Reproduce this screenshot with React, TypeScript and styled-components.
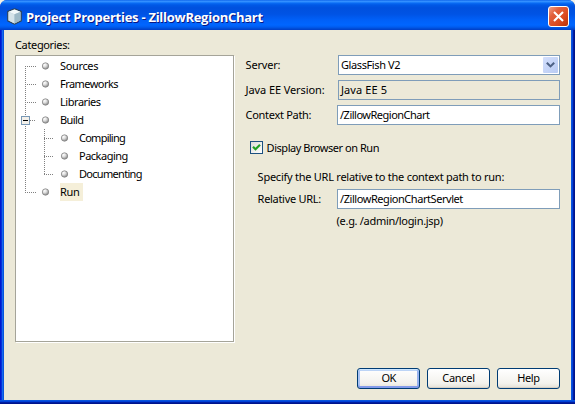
import React from "react";
import styled, { createGlobalStyle } from "styled-components";

const Global = createGlobalStyle`
  * { box-sizing: border-box; }
  html, body { margin: 0; background: #f4f2e6; }
  body { width: 575px; height: 404px; overflow: hidden; }
`;

const Window = styled.div`
  display: flex;
  flex-direction: column;
  width: 575px;
  height: 404px;
  padding: 0 4px 4px;
  border-radius: 7px 7px 0 0;
  background:
    linear-gradient(to bottom, #0855dd 0 1px, #0040d8 1px 2px, #001ea0 2px 3px, #00138c 3px 4px) bottom / 100% 4px no-repeat,
    linear-gradient(to right, #0019cf 0 1px, #0831d9 1px 2px, #166aee 2px 3px, #0855dd 3px 4px) left / 4px 100% no-repeat,
    linear-gradient(to right, #0855dd 0 1px, #0441d8 1px 2px, #001ea0 2px 3px, #00138c 3px 4px) right / 4px 100% no-repeat,
    #0855dd;
  color: #000;
  font-family: "Noto Sans", "Open Sans", sans-serif;
  font-size: 11px;
`;

const TitleBar = styled.header`
  display: flex;
  align-items: center;
  flex: 0 0 30px;
  margin: 0 -4px;
  padding: 2px 7px 0 7px;
  border-radius: 7px 7px 0 0;
  background: linear-gradient(to bottom, #0058e6 0, #3a93ff 1px, #2a8bff 2px, #0a6cf4 3px, #0058e6 5px, #0050de 8px, #0053e4 14px, #0060f8 20px, #0066ff 25px, #005cf0 27px, #0048d0 29px, #003dc8 30px);
  & > svg { flex: none; }
`;

const Title = styled.h1`
  flex: 1;
  margin: 1px 0 0 4px;
  color: #fff;
  font: bold 13px/18px "Open Sans", "Noto Sans", sans-serif;
  letter-spacing: -0.27px;
  text-shadow: 1px 1px 0 #0a1883;
  white-space: nowrap;
`;

const CloseButton = styled.button`
  display: grid;
  place-items: center;
  width: 21px;
  height: 21px;
  margin-top: 1px;
  margin-right: -1px;
  padding: 0;
  border: 1px solid #fff;
  border-radius: 3px;
  background: linear-gradient(135deg, #f0a088 0, #e2603c 30%, #dc4a20 65%, #b83208 100%);
`;

const Client = styled.main`
  display: flex;
  flex-direction: column;
  flex: 1;
  padding: 7px 11px 11px;
  background: #ece9d8;
`;

const Columns = styled.div`
  display: flex;
  flex: 1;
`;

const Label = styled.span<{ $track?: number }>`
  white-space: nowrap;
  line-height: 18px;
  letter-spacing: ${(p) => p.$track ?? 0}px;
`;

const Sidebar = styled.section`
  display: flex;
  flex-direction: column;
  width: 220px;
  & > ${Label} { height: 18px; line-height: 16px; }
`;

const TreeBox = styled.div`
  position: relative;
  width: 219px;
  height: 287px;
  padding: 1px 5px;
  border: 1px solid #a5a499;
  background: #fff;
  box-shadow: 1px 1px 0 #fff;
`;

const TreeLines = styled.svg`
  position: absolute;
  left: 0;
  top: 0;
`;

const TreeRow = styled.div<{ $level: number }>`
  display: flex;
  align-items: center;
  height: 18px;
  padding-left: ${(p) => 20 + p.$level * 19}px;
`;

const NodeName = styled(Label)<{ $selected?: boolean }>`
  height: 18px;
  margin-left: 10px;
  width: ${(p) => (p.$selected ? "23px" : "auto")};
  background: ${(p) => (p.$selected ? "#f5efd9" : "transparent")};
`;

const Form = styled.section`
  display: flex;
  flex-direction: column;
  width: 315px;
  margin: 18px 0 0 11px;
`;

const Field = styled.div<{ $indent?: number; $gap?: number }>`
  display: flex;
  align-items: center;
  height: 20px;
  margin-bottom: ${(p) => p.$gap ?? 5}px;
  padding-left: ${(p) => p.$indent ?? 0}px;
  & > ${Label}:first-child { flex: 1; }
`;

const ValueBox = styled.div<{ $kind?: "combo" | "disabled" }>`
  display: flex;
  align-items: center;
  justify-content: space-between;
  width: ${(p) => (p.$kind ? 222 : 223)}px;
  height: 20px;
  padding: 0 1px 0 2px;
  border: 1px solid #7f9db9;
  background: ${(p) => (p.$kind === "disabled" ? "#ece9d8" : "#fff")};
`;

const Arrow = styled.span`
  display: grid;
  place-items: center;
  width: 15px;
  height: 16px;
  border-radius: 1px;
  background: linear-gradient(135deg, #d3dffc, #b9cbf3);
`;

const CheckRow = styled.label`
  display: flex;
  align-items: center;
  height: 19px;
  margin: 8px 0 11px 4px;
  gap: 4px;
`;

const Check = styled.span`
  display: grid;
  place-items: center;
  width: 13px;
  height: 13px;
  border: 1px solid #1c5180;
  background: linear-gradient(135deg, #dcdcd7, #fff);
`;

const Note = styled.div<{ $left: number }>`
  display: flex;
  height: 18px;
  margin-bottom: 3px;
  padding-left: ${(p) => p.$left}px;
`;

const Actions = styled.footer`
  display: flex;
  justify-content: flex-end;
  gap: 7px;
`;

const Button = styled.button<{ $primary?: boolean }>`
  display: flex;
  align-items: center;
  justify-content: center;
  width: 63px;
  height: 21px;
  padding: 0 0 1px;
  border: 1px solid #003c74;
  border-radius: 3px;
  background: linear-gradient(to bottom, #fff, #f3f2ed 75%, #e4e0d5);
  box-shadow: ${(p) =>
    p.$primary
      ? "inset 0 1px #cee7ff, inset 0 -2px #839bea, inset 2px 0 #a9c3f4, inset -2px 0 #98b3ef, inset 0 2px #bcd4f6"
      : "inset 0 -1px #d6d0c5"};
  color: #000;
  font: inherit;
`;

const CubeIcon = () => (
  <svg width="15" height="17" viewBox="0 0 15 17">
    <path d="M7.5 .8 14.2 3.4v9.4L7.5 16.2 .8 12.8V3.4Z" fill="#b9cfda" stroke="#2b4054" strokeWidth="1.2" />
    <path d="M7.5 1.5 13.4 3.8 7.5 6.2 1.6 3.8Z" fill="#f2f8fa" />
    <path d="M1.5 4 7.5 6.3v9.2L1.5 12.4Z" fill="#d5e3e9" />
    <path d="M13.5 4 7.5 6.3v9.2l6-3.1Z" fill="#9db9c7" />
  </svg>
);

const Bullet = () => (
  <svg width="9" height="9" viewBox="0 0 9 9">
    <defs>
      <radialGradient id="ball" cx=".35" cy=".3" r=".7">
        <stop offset="0" stopColor="#fff" />
        <stop offset=".45" stopColor="#ddd" />
        <stop offset="1" stopColor="#8d8d8d" />
      </radialGradient>
    </defs>
    <circle cx="4.5" cy="4" r="3.2" fill="url(#ball)" stroke="#858585" strokeWidth=".8" />
  </svg>
);

const nodes = [
  { name: "Sources", level: 0, track: -0.35 },
  { name: "Frameworks", level: 0, track: -0.55 },
  { name: "Libraries", level: 0, track: -0.45 },
  { name: "Build", level: 0, track: -0.6 },
  { name: "Compiling", level: 1, track: -0.75 },
  { name: "Packaging", level: 1, track: -0.5 },
  { name: "Documenting", level: 1, track: -0.7 },
  { name: "Run", level: 0, track: -0.3, selected: true },
];

export default function App() {
  return (
    <>
      <Global />
      <Window>
        <TitleBar>
          <CubeIcon />
          <Title>Project Properties - ZillowRegionChart</Title>
          <CloseButton aria-label="Close">
            <svg width="11" height="11" viewBox="0 0 11 11">
              <path d="M1 1 10 10M10 1 1 10" stroke="#fff" strokeWidth="2.1" />
            </svg>
          </CloseButton>
        </TitleBar>
        <Client>
          <Columns>
            <Sidebar>
              <Label $track={-0.35}>Categories:</Label>
              <TreeBox>
                <TreeLines width="45" height="150" viewBox="16 56 45 150" shapeRendering="crispEdges">
                  <g stroke="#808080" strokeDasharray="1 1" fill="none">
                    <path d="M25.5 66V192M25 66.5H36M25 84.5H36M25 102.5H36M30 120.5H36M25 192.5H36" />
                    <path d="M44.5 129V174M44 138.5H54M44 156.5H54M44 174.5H54" />
                  </g>
                  <rect x="21.5" y="116.5" width="8" height="8" fill="#f3f0ea" stroke="#7898b5" />
                  <path d="M23 120.5H28" stroke="#000" />
                </TreeLines>
                {nodes.map((n) => (
                  <TreeRow key={n.name} $level={n.level}>
                    <Bullet />
                    <NodeName $track={n.track} $selected={n.selected}>{n.name}</NodeName>
                  </TreeRow>
                ))}
              </TreeBox>
            </Sidebar>
            <Form>
              <Field>
                <Label $track={-0.2}>Server:</Label>
                <ValueBox $kind="combo">
                  <Label $track={-0.4}>GlassFish V2</Label>
                  <Arrow>
                    <svg width="9" height="6" viewBox="0 0 9 6">
                      <path d="M.8 .8 4.5 4.4 8.2 .8" fill="none" stroke="#4d6185" strokeWidth="2.1" />
                    </svg>
                  </Arrow>
                </ValueBox>
              </Field>
              <Field>
                <Label $track={-0.1}>Java EE Version:</Label>
                <ValueBox $kind="disabled"><Label $track={0.1}>Java EE 5</Label></ValueBox>
              </Field>
              <Field>
                <Label $track={-0.3}>Context Path:</Label>
                <ValueBox><Label $track={-0.5}>/ZillowRegionChart</Label></ValueBox>
              </Field>
              <CheckRow>
                <Check>
                  <svg width="9" height="9" viewBox="0 0 9 9">
                    <path d="M1 3.8 3.5 6.3 8 1.8" fill="none" stroke="#21a121" strokeWidth="2.2" />
                  </svg>
                </Check>
                <Label $track={-0.46}>Display Browser on Run</Label>
              </CheckRow>
              <Note $left={12}><Label $track={-0.25}>Specify the URL relative to the context path to run:</Label></Note>
              <Field $indent={12} $gap={3}>
                <Label $track={-0.3}>Relative URL:</Label>
                <ValueBox><Label $track={-0.44}>/ZillowRegionChartServlet</Label></ValueBox>
              </Field>
              <Note $left={91}><Label $track={-0.3}>(e.g. /admin/login.jsp)</Label></Note>
            </Form>
          </Columns>
          <Actions>
            <Button $primary><Label $track={-0.7}>OK</Label></Button>
            <Button><Label $track={-0.3}>Cancel</Label></Button>
            <Button><Label $track={-0.4}>Help</Label></Button>
          </Actions>
        </Client>
      </Window>
    </>
  );
}
